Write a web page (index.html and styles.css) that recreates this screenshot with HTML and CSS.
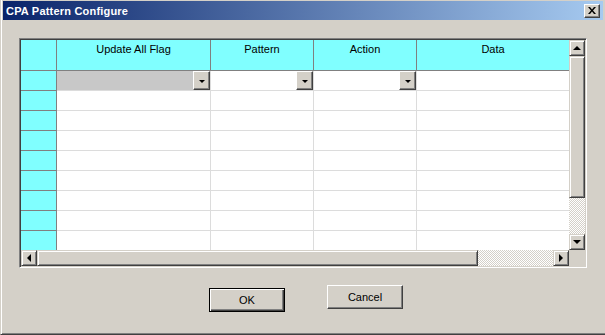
FILE: index.html
```html
<!DOCTYPE html>
<html>
  <head>
    <title>CPA Pattern Configure</title>
    <link rel="stylesheet" href="styles.css">
  </head>
  <body>
    <div class="dialog">
      <div class="titlebar">
        <span class="title">CPA Pattern Configure</span>
        <button class="close" type="button">
          <svg width="8" height="7" viewBox="0 0 8 7"><path d="M0 0h2l2 2.5 2-2.5h2l-3 3.5 3 3.5h-2l-2-2.5-2 2.5h-2l3-3.5z" fill="#000"/></svg>
        </button>
      </div>

      <div class="frame">
        <div class="sheet">
          <div class="hcell corner-cell"></div>
          <div class="hcell">Update All Flag</div>
          <div class="hcell">Pattern</div>
          <div class="hcell">Action</div>
          <div class="hcell last">Data</div>

          <div class="rhead"></div>
          <div class="cell combo flag"><span class="drop"><i></i></span></div>
          <div class="cell combo"><span class="drop"><i></i></span></div>
          <div class="cell combo"><span class="drop"><i></i></span></div>
          <div class="cell last"></div>

          <div class="rhead"></div><div class="cell"></div><div class="cell"></div><div class="cell"></div><div class="cell last"></div>
          <div class="rhead"></div><div class="cell"></div><div class="cell"></div><div class="cell"></div><div class="cell last"></div>
          <div class="rhead"></div><div class="cell"></div><div class="cell"></div><div class="cell"></div><div class="cell last"></div>
          <div class="rhead"></div><div class="cell"></div><div class="cell"></div><div class="cell"></div><div class="cell last"></div>
          <div class="rhead"></div><div class="cell"></div><div class="cell"></div><div class="cell"></div><div class="cell last"></div>
          <div class="rhead"></div><div class="cell"></div><div class="cell"></div><div class="cell"></div><div class="cell last"></div>
          <div class="rhead"></div><div class="cell"></div><div class="cell"></div><div class="cell"></div><div class="cell last"></div>
          <div class="rhead"></div><div class="cell"></div><div class="cell"></div><div class="cell"></div><div class="cell last"></div>
        </div>

        <div class="vscroll">
          <span class="sbtn"><i class="arr up"></i></span>
          <span class="thumb vthumb"></span>
          <span class="track"></span>
          <span class="sbtn"><i class="arr down"></i></span>
        </div>

        <div class="hscroll">
          <span class="sbtn"><i class="arr left"></i></span>
          <span class="thumb hthumb"></span>
          <span class="track"></span>
          <span class="sbtn"><i class="arr right"></i></span>
        </div>

        <div class="sizer"></div>
      </div>

      <div class="actions">
        <button type="button" class="btn default">OK</button>
        <button type="button" class="btn cancel">Cancel</button>
      </div>
    </div>
  </body>
</html>
```

FILE: styles.css
```css
body {
  margin: 0;
  padding: 0;
  background-color: #d4d0c8;
  font-family: "Liberation Sans", Arial, sans-serif;
  font-size: 11px;
  color: #000;
}

.dialog {
  box-sizing: border-box;
  width: 605px;
  height: 335px;
  background-color: #d4d0c8;
  border-left: 1px solid #d4d0c8;
  border-bottom: 1px solid #404040;
  box-shadow: inset 1px 0 #fff, inset 0 -1px #808080;
  padding: 1px 2px 0 2px;
}

.titlebar {
  height: 19px;
  display: flex;
  align-items: center;
  justify-content: space-between;
  padding: 0 3px 0 3px;
  background: linear-gradient(to right, #0a246a, #a6caf0);
}

.title {
  color: #fff;
  font-weight: bold;
  font-size: 11px;
  letter-spacing: 0.2px;
}

.close {
  box-sizing: border-box;
  width: 16px;
  height: 14px;
  padding: 0;
  margin: 1px 0 0 0;
  background-color: #d4d0c8;
  border: 1px solid;
  border-color: #fff #404040 #404040 #fff;
  box-shadow: inset -1px -1px #808080;
  display: flex;
  align-items: center;
  justify-content: center;
}

.close svg {
  display: block;
  margin: 0 1px 1px 0;
}

.frame {
  margin: 18px 0 0 16px;
  width: 568px;
  height: 230px;
  box-sizing: border-box;
  border: 1px solid;
  border-color: #808080 #fff #fff #808080;
  box-shadow: inset 1px 1px #404040, inset -1px -1px #d4d0c8;
  padding: 1px;
  display: grid;
  grid-template-columns: 548px 16px;
  grid-template-rows: 210px 16px;
}

.sheet {
  display: grid;
  grid-template-columns: 36px 154px 103px 103px 152px;
  grid-template-rows: 31px;
  grid-auto-rows: 20px;
  overflow: hidden;
  background-color: #fff;
}

.hcell,
.rhead,
.cell {
  box-sizing: border-box;
  border-right: 1px solid #808080;
  border-bottom: 1px solid #808080;
}

.hcell {
  background-color: #80ffff;
  text-align: center;
  padding-top: 3px;
}

.rhead {
  background-color: #80ffff;
}

.cell {
  background-color: #fff;
  border-color: #dcdcdc;
}

.last {
  border-right: none;
}

.combo {
  display: flex;
  justify-content: flex-end;
}

.flag {
  background-color: #c8c8c8;
}

.drop {
  box-sizing: border-box;
  width: 17px;
  height: 19px;
  background-color: #d4d0c8;
  border: 1px solid;
  border-color: #fff #404040 #404040 #fff;
  box-shadow: inset -1px -1px #808080;
  display: flex;
  align-items: center;
  justify-content: center;
}

.drop i {
  width: 0;
  height: 0;
  border-left: 3px solid transparent;
  border-right: 3px solid transparent;
  border-top: 3px solid #000;
  margin-top: 1px;
}

.vscroll {
  display: flex;
  flex-direction: column;
}

.hscroll {
  display: flex;
}

.sbtn,
.thumb {
  box-sizing: border-box;
  background-color: #d4d0c8;
  border: 1px solid;
  border-color: #d4d0c8 #404040 #404040 #d4d0c8;
  box-shadow: inset 1px 1px #fff, inset -1px -1px #808080;
}

.sbtn {
  width: 16px;
  height: 16px;
  flex: none;
  display: flex;
  align-items: center;
  justify-content: center;
}

.vthumb {
  height: 142px;
  flex: none;
}

.hthumb {
  width: 441px;
  flex: none;
}

.track {
  flex: 1;
  background: repeating-conic-gradient(#fff 0 25%, #d4d0c8 0 50%) 0 0 / 2px 2px;
}

.sizer {
  background-color: #d4d0c8;
}

.arr {
  width: 0;
  height: 0;
}

.arr.up {
  border-left: 4px solid transparent;
  border-right: 4px solid transparent;
  border-bottom: 4px solid #000;
}

.arr.down {
  border-left: 4px solid transparent;
  border-right: 4px solid transparent;
  border-top: 4px solid #000;
}

.arr.left {
  border-top: 4px solid transparent;
  border-bottom: 4px solid transparent;
  border-right: 4px solid #000;
}

.arr.right {
  border-top: 4px solid transparent;
  border-bottom: 4px solid transparent;
  border-left: 4px solid #000;
}

.actions {
  display: flex;
  align-items: flex-start;
  gap: 42px;
  margin: 17px 0 0 206px;
}

.btn {
  box-sizing: border-box;
  width: 76px;
  height: 24px;
  padding: 0;
  background-color: #d4d0c8;
  font-family: "Liberation Sans", Arial, sans-serif;
  font-size: 11px;
  color: #000;
  border: 1px solid;
  border-color: #fff #404040 #404040 #fff;
  box-shadow: inset -1px -1px #808080;
}

.btn.default {
  margin-top: 3px;
  border: 1px solid #000;
  box-shadow: inset 1px 1px #fff, inset -1px -1px #404040, inset -2px -2px #808080;
}

.btn.cancel {
  margin-top: 0;
}
```
